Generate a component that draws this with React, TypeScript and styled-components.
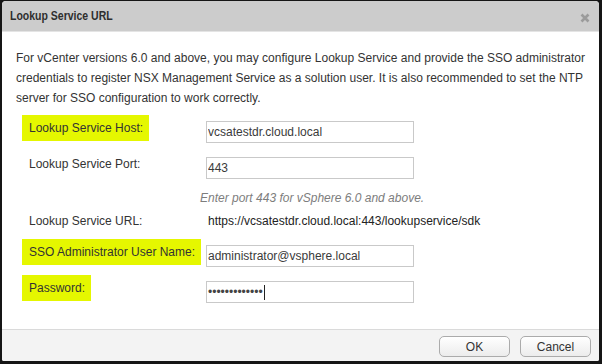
import React from 'react';
import styled, { createGlobalStyle } from 'styled-components';

const GlobalStyle = createGlobalStyle`
  html, body {
    margin: 0;
    padding: 0;
    background: #151515;
  }
  body {
    font-family: 'Liberation Sans', Arial, sans-serif;
    font-size: 12px;
    color: #333;
  }
`;

const Screen = styled.div`
  width: 602px;
  height: 364px;
  box-sizing: border-box;
  padding: 1px 3px 3px 2px;
`;

const Dialog = styled.div`
  height: 100%;
  display: flex;
  flex-direction: column;
  background: #fff;
  border-radius: 4px 4px 2px 2px;
  overflow: hidden;
`;

const TitleBar = styled.div`
  height: 30px;
  flex: none;
  display: flex;
  align-items: center;
  justify-content: space-between;
  padding: 0 9px 0 8px;
  background: #cccccc;
  border-bottom: 1px solid #e4e4e4;
`;

const Title = styled.h1`
  margin: 0;
  font-family: 'Liberation Sans', Arial, sans-serif;
  font-size: 12.5px;
  font-weight: bold;
  color: #2e2e2e;
  transform: scaleX(0.84);
  transform-origin: left center;
`;

const CloseButton = styled.button`
  width: 10px;
  height: 10px;
  margin-top: 4px;
  padding: 0;
  border: 0;
  background: none;
  display: flex;
  cursor: pointer;
`;

const Body = styled.div`
  flex: 1;
  padding: 16px 12px 0 14px;
`;

const Intro = styled.p`
  margin: 0;
  font-size: 12px;
  line-height: 20px;
  color: #333;
`;

const Form = styled.div`
  margin-top: 7px;
  padding-left: 6px;
  display: flex;
  flex-direction: column;
`;

const FieldRow = styled.div<{ $gap?: number }>`
  display: grid;
  grid-template-columns: 184px 208px;
  align-items: start;
  margin-top: ${(p) => p.$gap ?? 0}px;
`;

const Label = styled.label<{ $marked?: boolean }>`
  justify-self: start;
  padding: 5px 6px 5px 7px;
  line-height: 16px;
  font-size: 12px;
  color: #333;
  background: ${(p) => (p.$marked ? '#e5f700' : 'transparent')};
`;

const TextInput = styled.input`
  margin: 6px 0 0;
  width: 208px;
  height: 22px;
  box-sizing: border-box;
  padding: 0 1px;
  border: 1px solid #c9c9c9;
  border-radius: 0;
  font-family: 'Liberation Sans', Arial, sans-serif;
  font-size: 12px;
  color: #3a3a3a;
  outline: none;
`;

const PasswordBox = styled.div`
  margin-top: 6px;
  width: 208px;
  height: 22px;
  box-sizing: border-box;
  padding: 0 1px;
  border: 1px solid #c9c9c9;
  display: flex;
  align-items: center;
  font-size: 12px;
  color: #444;
`;

const Caret = styled.span`
  width: 1px;
  height: 15px;
  margin-left: 1px;
  background: #222;
`;

const Hint = styled.div`
  margin: 11px 0 0 178px;
  line-height: 16px;
  font-style: italic;
  color: #7d7d7d;
`;

const InfoRow = styled.div`
  display: grid;
  grid-template-columns: 184px 1fr;
  margin-top: 7px;
  line-height: 16px;
`;

const InfoLabel = styled.span`
  padding: 0 7px;
`;

const InfoValue = styled.span`
  padding-left: 2px;
  color: #222;
`;

const Footer = styled.div`
  height: 32px;
  flex: none;
  display: flex;
  justify-content: flex-end;
  align-items: flex-start;
  gap: 10px;
  padding: 6px 8px 0 0;
  box-sizing: border-box;
  background: #f3f3f3;
  border-top: 1px solid #dadada;
`;

const Button = styled.button`
  width: 71px;
  height: 21px;
  padding: 0;
  border: 1px solid #ababab;
  border-radius: 5px;
  background: linear-gradient(#ffffff, #ececec);
  font-family: 'Liberation Sans', Arial, sans-serif;
  font-size: 12px;
  color: #333;
  cursor: pointer;
`;

export default function App() {
  return (
    <Screen>
      <GlobalStyle />
      <Dialog>
        <TitleBar>
          <Title>Lookup Service URL</Title>
          <CloseButton aria-label="Close">
            <svg width="10" height="10" viewBox="0 0 10 10">
              <path d="M1.5 1.5 L8.5 8.5 M8.5 1.5 L1.5 8.5" stroke="#9b9b9b" strokeWidth="2.6" />
            </svg>
          </CloseButton>
        </TitleBar>
        <Body>
          <Intro>
            For vCenter versions 6.0 and above, you may configure Lookup Service and provide the SSO administrator
            credentials to register NSX Management Service as a solution user. It is also recommended to set the NTP
            server for SSO configuration to work correctly.
          </Intro>
          <Form>
            <FieldRow>
              <Label $marked>Lookup Service Host:</Label>
              <TextInput defaultValue="vcsatestdr.cloud.local" />
            </FieldRow>
            <FieldRow $gap={8}>
              <Label>Lookup Service Port:</Label>
              <TextInput defaultValue="443" />
            </FieldRow>
            <Hint>Enter port 443 for vSphere 6.0 and above.</Hint>
            <InfoRow>
              <InfoLabel>Lookup Service URL:</InfoLabel>
              <InfoValue>https://vcsatestdr.cloud.local:443/lookupservice/sdk</InfoValue>
            </InfoRow>
            <FieldRow $gap={10}>
              <Label $marked>SSO Administrator User Name:</Label>
              <TextInput defaultValue="administrator@vsphere.local" />
            </FieldRow>
            <FieldRow $gap={8}>
              <Label $marked>Password:</Label>
              <PasswordBox>
                {'•••••••••••••'}
                <Caret />
              </PasswordBox>
            </FieldRow>
          </Form>
        </Body>
        <Footer>
          <Button>OK</Button>
          <Button>Cancel</Button>
        </Footer>
      </Dialog>
    </Screen>
  );
}
